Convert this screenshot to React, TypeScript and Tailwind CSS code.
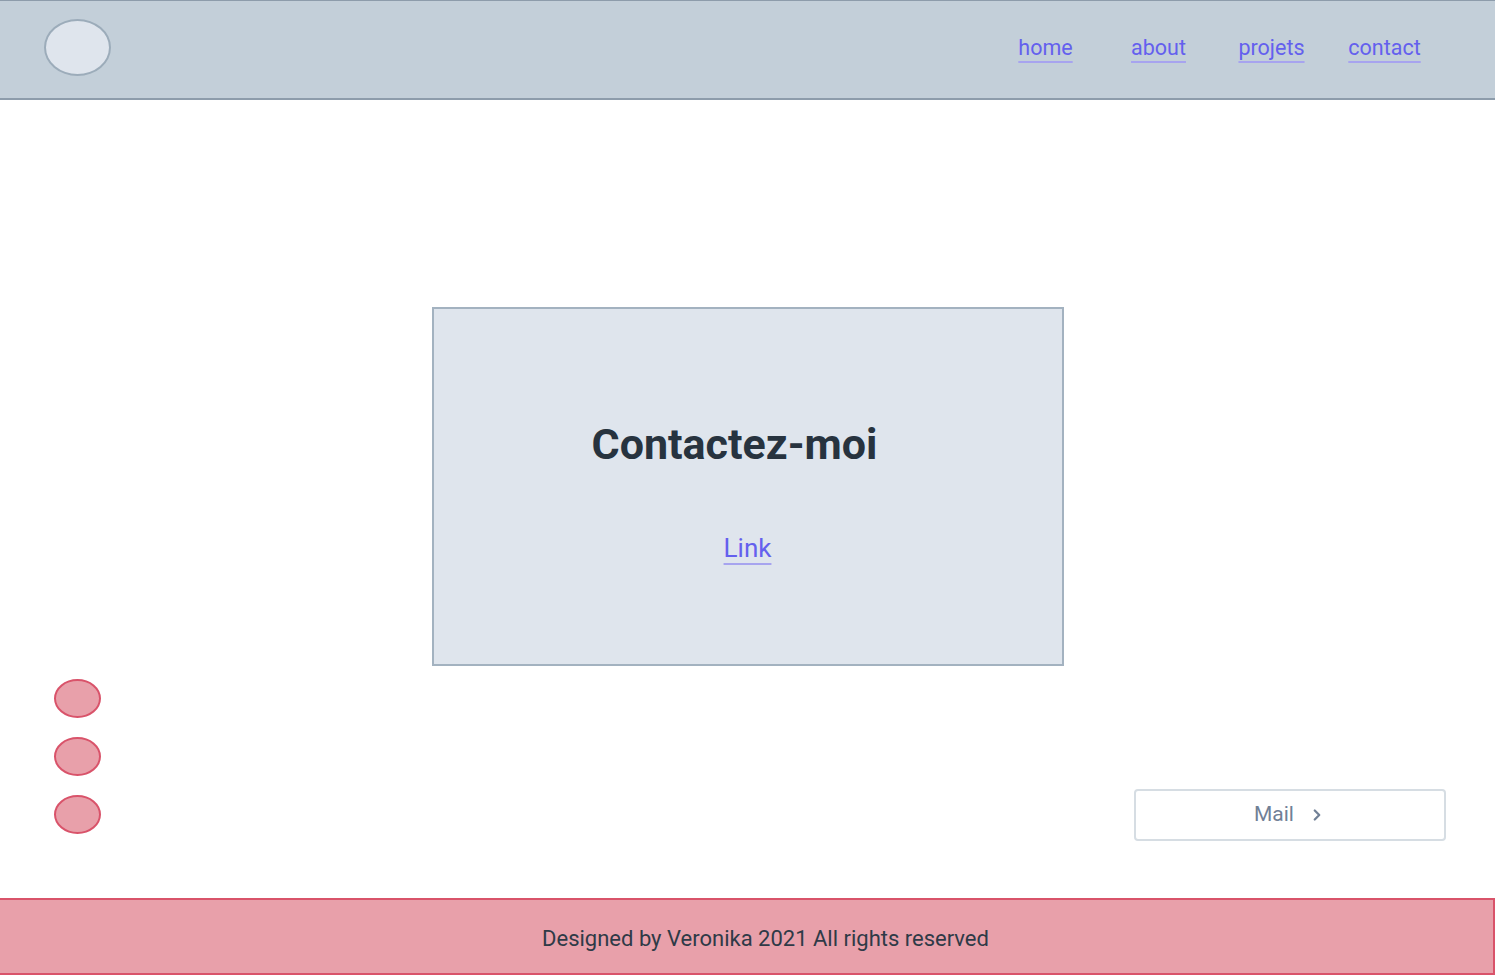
import { ChevronRight } from "lucide-react";

const navLinks = ["home", "about", "projets", "contact"];

function Header() {
  return (
    <header className="h-[100px] bg-[#c3cfd9] border-t border-b-2 border-[#8d9cab] flex items-center justify-between pl-[44px] pr-[54px]">
      <div className="w-[67px] h-[57px] rounded-[50%] bg-[#dfe5ed] border-2 border-[#9cacba] mt-[-4px]" />
      <nav className="flex items-center text-[21.5px] pb-[2px]">
        {navLinks.map((l) => (
          <div key={l} className="w-[113px] text-center">
            <a
              href="#"
              className="text-[#6460ee] underline decoration-2 decoration-[#a7a4ef] underline-offset-[6px]"
            >
              {l}
            </a>
          </div>
        ))}
      </nav>
    </header>
  );
}

function Footer() {
  return (
    <footer className="h-[77px] bg-[#e8a0aa] border-t-2 border-b-2 border-r-2 border-[#d9536a] flex items-center justify-center">
      <p className="text-[22px] text-[#2f3a47] pl-[38px] pt-[3px]">Designed by Veronika 2021 All rights reserved</p>
    </footer>
  );
}

export default function App() {
  return (
    <div
      className="min-h-screen flex flex-col bg-white"
      style={{ fontFamily: "Roboto, 'Liberation Sans', sans-serif" }}
    >
      <Header />
      <main className="flex-1 flex flex-col">
        <div className="pt-[207px] flex justify-center">
          <div className="w-[632px] h-[359px] bg-[#dfe5ed] border-2 border-[#a3b2c0] flex flex-col items-center pt-[114px] pr-[26px]">
            <h1 className="text-[43px] font-bold text-[#27333f] leading-none">Contactez-moi</h1>
            <a
              href="#"
              className="mt-[63px] ml-[26px] text-[26px] text-[#6460ee] underline decoration-2 decoration-[#a7a4ef] underline-offset-[6px]"
            >
              Link
            </a>
          </div>
        </div>
        <div className="flex items-end justify-between pl-[54px] pr-[49px] pt-[13px]">
          <div className="flex flex-col gap-[19px]">
            {[0, 1, 2].map((i) => (
              <div key={i} className="w-[47px] h-[39px] rounded-[50%] bg-[#e8a0aa] border-2 border-[#d9536a]" />
            ))}
          </div>
          <button className="w-[312px] h-[52px] border-2 border-[#d6dde3] rounded-[4px] bg-white flex items-center justify-center gap-[14px] text-[21px] text-[#718096] mb-[-7px]">
            <span>Mail</span>
            <ChevronRight size={18} strokeWidth={3} />
          </button>
        </div>
      </main>
      <Footer />
    </div>
  );
}
